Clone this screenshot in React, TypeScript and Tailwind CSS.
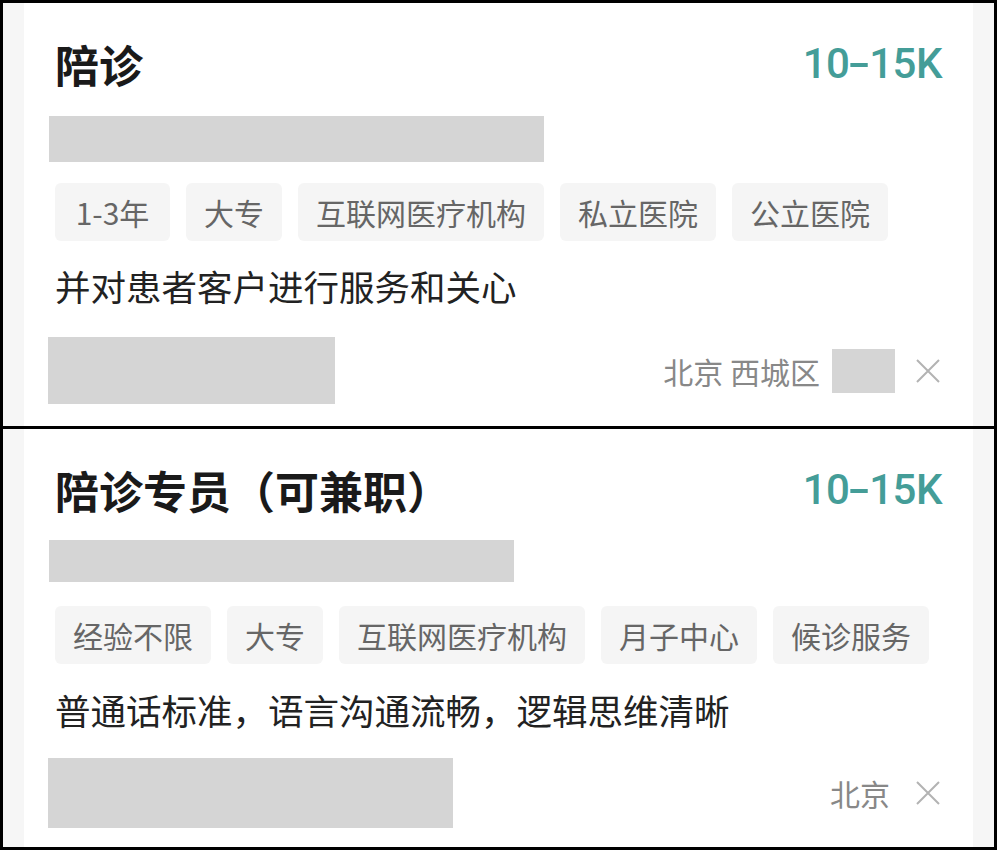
const FONT = { fontFamily: '"Noto Sans CJK SC", "Noto Sans", sans-serif' };

function CloseIcon() {
  return (
    <svg width="24" height="24" viewBox="0 0 24 24" className="shrink-0">
      <path d="M1 1 L23 23 M23 1 L1 23" stroke="#b3b3b3" strokeWidth="2" fill="none" />
    </svg>
  );
}

function Tag({ children, className = "" }: { children: string; className?: string }) {
  return (
    <span
      className={`h-[58px] px-[18px] flex items-center justify-center rounded-md bg-[#f5f5f5] text-[30px] text-[#666666] leading-none ${className}`}
    >
      {children}
    </span>
  );
}

function Salary() {
  return (
    <span
      className="text-[42px] leading-none font-medium tracking-[-0.5px] text-[#449d98] flex items-center"
      style={{ fontFamily: 'Roboto, "Liberation Sans", sans-serif' }}
    >
      10<span className="inline-block mx-[3px] scale-x-[1.6]">-</span>15K
    </span>
  );
}

export default function App() {
  return (
    <div
      className="w-[997px] h-[850px] bg-black p-[3px] flex flex-col gap-[3px] [text-spacing-trim:space-all]"
      style={FONT}
    >
      {/* card 1 */}
      <div className="h-[423px] bg-[#f6f6f6] px-[21px] flex">
        <div className="flex-1 bg-white pl-[31px] pr-[31px] pt-[31px] flex flex-col">
          <div className="h-[60px] flex items-center justify-between">
            <span className="text-[44px] font-semibold text-[#1a1a1a] leading-none">陪诊</span>
            <Salary />
          </div>
          <div className="mt-[22px] -ml-[6px] w-[495px] h-[46px] bg-[#d5d5d5]" />
          <div className="mt-[21px] flex gap-4">
            <Tag className="w-[115px]">1-3年</Tag>
            <Tag>大专</Tag>
            <Tag>互联网医疗机构</Tag>
            <Tag>私立医院</Tag>
            <Tag>公立医院</Tag>
          </div>
          <div className="mt-[23px] h-[44px] flex items-center text-[35.5px] text-[#222222] leading-none">
            并对患者客户进行服务和关心
          </div>
          <div className="mt-[29px] flex items-center justify-between">
            <div className="-ml-[7px] w-[287px] h-[67px] bg-[#d5d5d5]" />
            <div className="flex items-center">
              <span className="text-[30px] text-[#888888] leading-none">北京 西城区</span>
              <div className="ml-[12px] w-[63px] h-[44px] bg-[#d5d5d5]" />
              <div className="ml-[21px] mr-[2px]">
                <CloseIcon />
              </div>
            </div>
          </div>
        </div>
      </div>
      {/* card 2 */}
      <div className="flex-1 bg-[#f6f6f6] px-[21px] flex">
        <div className="flex-1 bg-white pl-[31px] pr-[31px] pt-[31px] flex flex-col">
          <div className="h-[60px] flex items-center justify-between">
            <span className="text-[44px] font-semibold text-[#1a1a1a] leading-none">陪诊专员（可兼职）</span>
            <Salary />
          </div>
          <div className="mt-[20px] -ml-[6px] w-[465px] h-[42px] bg-[#d5d5d5]" />
          <div className="mt-[24px] flex gap-4">
            <Tag>经验不限</Tag>
            <Tag>大专</Tag>
            <Tag>互联网医疗机构</Tag>
            <Tag>月子中心</Tag>
            <Tag>候诊服务</Tag>
          </div>
          <div className="mt-[24px] h-[44px] flex items-center text-[35.5px] text-[#222222] leading-none">
            普通话标准，语言沟通流畅，逻辑思维清晰
          </div>
          <div className="mt-[26px] flex items-center justify-between">
            <div className="-ml-[7px] w-[405px] h-[70px] bg-[#d5d5d5]" />
            <div className="flex items-center">
              <span className="text-[30px] text-[#888888] leading-none">北京</span>
              <div className="ml-[26px] mr-[2px]">
                <CloseIcon />
              </div>
            </div>
          </div>
        </div>
      </div>
    </div>
  );
}
